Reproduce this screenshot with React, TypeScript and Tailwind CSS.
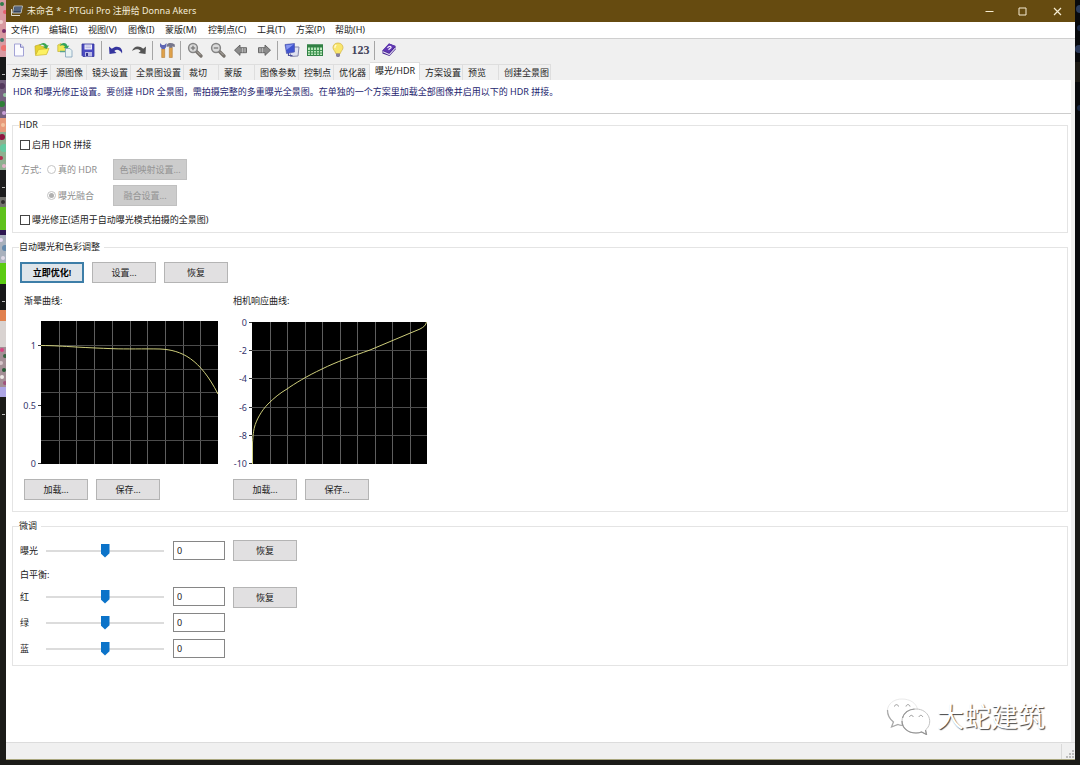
import React from "react";

const menus = [
  { label: "文件(F)", width: "w-[38px]" },
  { label: "编辑(E)", width: "w-[39px]" },
  { label: "视图(V)", width: "w-[40px]" },
  { label: "图像(I)", width: "w-[37px]" },
  { label: "蒙版(M)", width: "w-[43px]" },
  { label: "控制点(C)", width: "w-[49px]" },
  { label: "工具(T)", width: "w-[39px]" },
  { label: "方案(P)", width: "w-[39px]" },
  { label: "帮助(H)", width: "w-[39px]" },
];

const tabs = [
  { label: "方案助手", width: "w-[44px]" },
  { label: "源图像", width: "w-[36px]" },
  { label: "镜头设置", width: "w-[44px]" },
  { label: "全景图设置", width: "w-[53px]" },
  { label: "裁切", width: "w-[35px]" },
  { label: "蒙版", width: "w-[36px]" },
  { label: "图像参数", width: "w-[44px]" },
  { label: "控制点", width: "w-[35px]" },
  { label: "优化器", width: "w-[36px]" },
  { label: "曝光/HDR", width: "w-[50px]", active: true },
  { label: "方案设置", width: "w-[43px]" },
  { label: "预览", width: "w-[36px]" },
  { label: "创建全景图", width: "w-[52px]" },
];

function Icon({ children }: { children: React.ReactNode }) {
  return (
    <svg viewBox="0 0 16 16" className="h-4 w-4" aria-hidden="true">
      {children}
    </svg>
  );
}

function Magnifier({ plus }: { plus?: boolean }) {
  return (
    <Icon>
      <path d="M9.5 9.5 14 14" stroke="#77726c" strokeWidth="3.2" strokeLinecap="round" />
      <path d="M10 9.6 13.600 13.200" stroke="#b5b1ac" strokeWidth="1" />
      <circle cx="6" cy="6" r="4.4" fill="#dadada" stroke="#858585" strokeWidth="1.5" />
      <path d="M3.8 6h4.4" stroke="#777" strokeWidth="1.3" />
      {plus && <path d="M6 3.8v4.4" stroke="#777" strokeWidth="1.3" />}
    </Icon>
  );
}

const toolGroups: { label: string; icon: React.ReactNode }[][] = [
  [
    {
      label: "新建",
      icon: (
        <Icon>
          <path d="M3.5 2h6l3 3.2V14h-9z" fill="#fbfbff" stroke="#a3a3d6" />
          <path d="M9.5 2v3.2h3" fill="#dcdcf4" stroke="#8080c0" />
        </Icon>
      ),
    },
    {
      label: "打开",
      icon: (
        <Icon>
          <path d="M1.500 12.500 1 4 6 2.500 7.500 4.500 13 5v6z" fill="#e6d22f" stroke="#c2ab28" strokeWidth=".7" />
          <path d="M1.500 13.500 4.500 7.500 15 6.500 12.500 12.500z" fill="#fcf162" stroke="#d0b92c" strokeWidth=".7" />
          <path d="M5 3.500C7.500-.2 12 .3 13 3.500L14.700 3 12.500 7 9 5l1.800-.6C10 2.800 7 2.300 5 3.500z" fill="#3aa551" />
        </Icon>
      ),
    },
    {
      label: "添加图像",
      icon: (
        <Icon>
          <path d="M.8 9.500V3L4 1.500 5.500 3H9v6.500z" fill="#f4e752" stroke="#c3b23a" strokeWidth=".7" />
          <path d="M2.500 4C5-.2 9.500.5 10.500 4L12.200 3.500 10 7.500l-3.500-2L8 5C7.500 3 4.500 2.700 2.500 4z" fill="#36a45c" />
          <path d="M8.500 6.500H13l2 2.200V15H8.500z" fill="#e9f3f3" stroke="#7f9fba" strokeWidth=".8" />
          <path d="M3 9.500h5" stroke="#58a58c" strokeWidth="1.500" />
        </Icon>
      ),
    },
    {
      label: "保存",
      icon: (
        <Icon>
          <path d="M2 2h12v12.500H3L2 13.500z" fill="#4a4ac0" stroke="#34349a" strokeWidth=".8" />
          <rect x="4.500" y="2.500" width="7.500" height="5" fill="#eeeefa" />
          <path d="M5.500 4h5.500M5.500 5.700h5.500" stroke="#9a9ad2" strokeWidth=".7" />
          <rect x="5" y="10" width="7" height="4.500" fill="#b9b9e4" />
          <rect x="6" y="11" width="2" height="3" fill="#33338f" />
        </Icon>
      ),
    },
  ],
  [
    {
      label: "撤销",
      icon: (
        <Icon>
          <path d="M1 4.500 1.500 12 8.500 11 6.300 9C8.500 6.800 12 7.500 14 11.500 15.500 5.500 9 2.300 3.800 6.800z" fill="#34349e" />
        </Icon>
      ),
    },
    {
      label: "重做",
      icon: (
        <Icon>
          <path d="M15 4.500 14.500 12 7.500 11 9.700 9C8 6.800 4.500 6.800 1 9 2.500 4 8 2.800 12.200 6.800z" fill="#555" />
        </Icon>
      ),
    },
  ],
  [
    {
      label: "选项",
      icon: (
        <Icon>
          <path d="M2.700 7h3v8.500h-3zM10.300 5.500h3v10h-3z" fill="#dfa24b" stroke="#ad7127" strokeWidth=".5" />
          <path d="M1 1v3.500L2.800 7h2.900l1.800-2.500V1L5.400 3H3z" fill="#5f66b4" />
          <path d="M8 2.500C10 .5 13 .8 15.800 2.500V5L13.300 4.500v1.200h-3V4.500L8 4.800z" fill="#77778c" />
        </Icon>
      ),
    },
  ],
  [
    { label: "放大", icon: <Magnifier plus /> },
    { label: "缩小", icon: <Magnifier /> },
    {
      label: "上一个",
      icon: (
        <Icon>
          <path d="M1.500 8.200 7 3v2.700h6.500v5H7v2.700z" fill="#8b8b8b" stroke="#606060" strokeWidth=".9" />
          <path d="M9.500 6v4.400M12 6v4.400" stroke="#c5c5c5" strokeWidth=".8" />
        </Icon>
      ),
    },
    {
      label: "下一个",
      icon: (
        <Icon>
          <path d="M14.500 8.200 9 3v2.700H2.500v5H9v2.700z" fill="#8b8b8b" stroke="#606060" strokeWidth=".9" />
          <path d="M6.500 6v4.400M4 6v4.400" stroke="#c5c5c5" strokeWidth=".8" />
        </Icon>
      ),
    },
  ],
  [
    {
      label: "全景图编辑器",
      icon: (
        <Icon>
          <path d="M8 5h7l-1 9-7.500.5v-3" fill="#dfe1f0" stroke="#8587ac" />
          <path d="M1 2.500 10.500 1.500v8.500L2.500 11.500z" fill="#4054cf" stroke="#4a52a8" strokeWidth=".6" />
          <path d="M2 3.300 9.800 2.300 2.500 8z" fill="#8897ef" />
          <path d="M4.500 11v2.500h4" fill="none" stroke="#4b4f9d" strokeWidth="1.200" />
        </Icon>
      ),
    },
    {
      label: "控制点表",
      icon: (
        <Icon>
          <rect x=".5" y="3" width="15" height="10.500" fill="#c5edc4" stroke="#318044" />
          <rect x="0" y="2.500" width="16" height="3" fill="#318044" />
          <path d="M1 8.500h14M1 11h14M3.500 5v8.500M6.500 5v8.500M9.500 5v8.500M12.500 5v8.500" stroke="#3d9350" strokeWidth="1.200" />
        </Icon>
      ),
    },
    {
      label: "提示",
      icon: (
        <Icon>
          <path d="M8 1C4.800 1 3 3.200 3 5.700 3 8 5.300 9 5.700 11.500h4.600C10.700 9 13 8 13 5.700 13 3.200 11.200 1 8 1z" fill="#f9e66d" stroke="#d5b94c" strokeWidth=".8" />
          <path d="M6.300 3C5 3.800 4.700 5 5 6" fill="none" stroke="#fffce4" strokeWidth="1.200" />
          <path d="M6 11.500h4v2.500L9 15H7L6 14z" fill="#85809d" />
        </Icon>
      ),
    },
    {
      label: "数字变换",
      icon: <span className="font-['Liberation_Serif',serif] text-[12px] font-bold leading-4 text-[#44445a]">123</span>,
    },
  ],
  [
    {
      label: "帮助",
      icon: (
        <Icon>
          <path d="M1.500 8.500 8 1.500l6.500 2.500v3.500L8.500 14 1.500 11.500z" fill="#42208c" />
          <path d="M1.500 8.500 8 1.500l6.500 2.500L8 11z" fill="#6038b2" />
          <path d="M2 9.800 8.300 12.500l6-6.500" fill="none" stroke="#e6dff5" strokeWidth="1.100" />
          <path d="M6.500 5.800C8 3.500 10.500 4.200 10 5.700L7.500 7.700" fill="none" stroke="#f5e9ff" strokeWidth="1.200" />
        </Icon>
      ),
    },
  ],
];

function PushButton({ children, primary, disabled, wide }: { children: React.ReactNode; primary?: boolean; disabled?: boolean; wide?: boolean }) {
  return (
    <button
      type="button"
      disabled={disabled}
      className={[
        "h-[21px] shrink-0 text-center",
        wide ? "w-[74px]" : "w-16",
        primary
          ? "border-2 border-[#3d7ea8] bg-[#dfe5ea] font-semibold text-black"
          : disabled
            ? "border border-[#c0c0c0] bg-[#cccccc] text-[#939393]"
            : "border border-[#b4b4b4] bg-[#e1e0e1] text-[#1c1c1c]",
      ].join(" ")}
    >
      {children}
    </button>
  );
}

function Group({ title, className, children }: { title: string; className: string; children: React.ReactNode }) {
  return (
    <fieldset className={"min-w-0 border border-[#e4e4e4] px-[7px] " + className}>
      <legend className="-ml-px pr-1 text-[#222]">{title}</legend>
      {children}
    </fieldset>
  );
}

function Check({ id, label }: { id: string; label: string }) {
  return (
    <div className="flex h-[14px] items-center gap-[2px]">
      <input id={id} type="checkbox" className="h-[10px] w-[10px] appearance-none border border-[#444] bg-white checked:bg-[#0078d7]" />
      <label htmlFor={id}>{label}</label>
    </div>
  );
}

function Radio({ id, label, checked }: { id: string; label: string; checked?: boolean }) {
  return (
    <div className="flex w-[66px] items-center gap-[2px] text-[#8e8e8e]">
      <input
        id={id}
        name="method"
        type="radio"
        disabled
        defaultChecked={checked}
        className="h-[9px] w-[9px] appearance-none rounded-full border border-[#c4c4c4] bg-white bg-clip-content p-[1px] checked:bg-[#b0b0b0]"
      />
      <label htmlFor={id}>{label}</label>
    </div>
  );
}

type Tick = { y: number; label: string };

function Plot({ title, left, top, width, height, rows, ticks, curve }: {
  title: string; left: number; top: number; width: number; height: number; rows: number[]; ticks: Tick[]; curve: string;
}) {
  const columns = Array.from({ length: 9 }, (_, i) => Math.round(left + ((i + 1) * width) / 10) + 0.5);
  return (
    <svg viewBox="0 0 204 158" className="mt-[7px] block h-[158px] w-[204px] overflow-visible" role="img" aria-label={title}>
      <rect x={left} y={top} width={width} height={height} fill="#000" />
      {columns.map((x) => (
        <path key={x} d={`M${x} ${top}v${height}`} stroke="#5e5e5e" />
      ))}
      {rows.map((y) => (
        <path key={y} d={`M${left} ${y + 0.5}h${width}`} stroke="#4c4c4c" />
      ))}
      {ticks.map((t) => (
        <g key={t.label}>
          <path d={`M${left - 3} ${t.y + 0.5}h3`} stroke="#333" />
          <text x={left - 5} y={t.y + 4} textAnchor="end" fontSize="9" fill="#34346c">{t.label}</text>
        </g>
      ))}
      <path d={curve} fill="none" stroke="#cfcf7c" strokeWidth="1" />
    </svg>
  );
}

function Slider({ id, label }: { id: string; label: string }) {
  return (
    <>
      <label htmlFor={id} className="w-[26px] shrink-0">{label}</label>
      <input
        id={id}
        type="range"
        min={-100}
        max={100}
        defaultValue={0}
        className="h-4 w-[118px] appearance-none bg-transparent [&::-webkit-slider-runnable-track]:h-[2px] [&::-webkit-slider-runnable-track]:bg-[#dcdcdc] [&::-webkit-slider-thumb]:-mt-[6px] [&::-webkit-slider-thumb]:h-[14px] [&::-webkit-slider-thumb]:w-[9px] [&::-webkit-slider-thumb]:appearance-none [&::-webkit-slider-thumb]:bg-[#0b73c9] [&::-webkit-slider-thumb]:[clip-path:polygon(0_0,100%_0,100%_70%,50%_100%,0_70%)]"
      />
      <input
        type="text"
        defaultValue="0"
        aria-label={label + "数值"}
        className="ml-[9px] h-[19px] w-[52px] border border-[#868686] bg-white px-[3px] pb-px leading-3 text-[#222]"
      />
    </>
  );
}

function LeftDesktop() {
  const blocks: [number, number, string][] = [
    [0, 57, "#d99aa2"], [57, 23, "#171819"], [80, 38, "#75607f"], [118, 14, "#e79a7b"], [132, 38, "#8eb08f"],
    [170, 27, "#1d1d1e"], [197, 10, "#74736f"], [207, 23, "#5fc21d"], [230, 5, "#2d1650"], [235, 28, "#a8b0bc"],
    [263, 21, "#5bcb12"], [284, 26, "#171718"], [310, 11, "#e1814f"], [321, 26, "#d9d3d1"], [347, 40, "#a48f96"],
    [387, 10, "#ada5e4"],
  ];
  const spots: [number, number, number, string][] = [
    [2, 4, 2, "#327c4a"], [5, 12, 2, "#e35f6f"], [1, 22, 2, "#f0cfcf"], [4, 31, 2, "#7a2d68"], [2, 40, 2, "#3b7568"], [4, 48, 3, "#ed716f"],
    [2, 86, 3, "#53385d"], [5, 95, 2, "#96c4a3"], [2, 104, 3, "#2f7e38"], [4, 113, 2, "#c9a1d8"], [3, 125, 2, "#f3c3a0"],
    [2, 137, 3, "#8f1640"], [4, 148, 4, "#65caa0"], [1, 158, 2, "#b22e4d"], [4, 166, 2, "#dfb0c4"], [3, 202, 2, "#302f2e"],
    [1, 240, 2, "#e4d9f0"], [5, 248, 3, "#6489ac"], [3, 258, 2, "#ddd7e5"],
    [2, 350, 2, "#d84482"], [5, 356, 2, "#386442"], [1, 363, 2, "#d7c5ca"], [4, 370, 2, "#285b37"], [2, 377, 2, "#eee9e7"], [5, 383, 2, "#a0527d"],
  ];
  return (
    <svg viewBox="0 0 6 420" className="h-[420px] w-[6px]" aria-hidden="true">
      {blocks.map(([y, h, fill]) => <rect key={y} y={y} width="6" height={h} fill={fill} />)}
      {spots.map(([x, y, r, fill]) => <circle key={y} cx={x} cy={y} r={r} fill={fill} />)}
      {[74, 187, 301, 414].map((y) => <rect key={y} x="2" y={y} width="3" height="1" fill="#bbb" />)}
    </svg>
  );
}

export default function App() {
  return (
    <div lang="zh-CN" className="relative flex min-h-screen bg-[#1b1b18] pb-[5px] font-['Noto_Sans','Noto_Sans_CJK_SC',sans-serif] text-[9px] leading-3 text-[#222]">
      <div className="w-[6px] shrink-0">
        <LeftDesktop />
      </div>

      <div className="flex min-w-0 flex-1 flex-col border-b border-[#a9a67e] bg-white">
        <header className="flex h-[22px] items-center bg-[#664b10] text-[#f3ecd9]">
          <svg viewBox="0 0 12 12" className="ml-[5px] h-3 w-3" aria-hidden="true">
            <path d="M3 1h8.500L10 8H1.500z" fill="#35435b" stroke="#c9ccc8" strokeWidth=".9" />
            <path d="M3.500 3h7M3 5h7" stroke="#8fa3bb" strokeWidth=".7" />
            <path d="M.5 4v6.500H9" fill="none" stroke="#dedcd0" strokeWidth="1" />
          </svg>
          <h1 className="ml-1 flex-1 whitespace-nowrap">未命名 * - PTGui Pro 注册给 Donna Akers</h1>
          <div className="flex">
            <button type="button" aria-label="最小化" className="flex h-[22px] w-[33px] items-center justify-center">
              <svg viewBox="0 0 9 9" className="h-[9px] w-[9px]"><path d="M.5 4.500h8" stroke="#f6ecd2" /></svg>
            </button>
            <button type="button" aria-label="最大化" className="flex h-[22px] w-[33px] items-center justify-center">
              <svg viewBox="0 0 9 9" className="h-[9px] w-[9px]"><path d="M1 1h7v7H1z" fill="none" stroke="#f6ecd2" /></svg>
            </button>
            <button type="button" aria-label="关闭" className="flex h-[22px] w-9 items-center justify-center">
              <svg viewBox="0 0 9 9" className="h-[9px] w-[9px]"><path d="m1 1 7 7M8 1 1 8" stroke="#f6ecd2" strokeWidth="1.200" /></svg>
            </button>
          </div>
        </header>

        <nav className="flex h-[17px] items-center border-b border-[#cfcfcf] bg-white pl-[5px]">
          {menus.map((m) => (
            <button key={m.label} type="button" className={"whitespace-nowrap text-left " + m.width}>{m.label}</button>
          ))}
        </nav>

        <div className="flex h-[22px] items-center bg-[#f0f0f0] pl-px" role="toolbar">
          {toolGroups.map((group, i) => (
            <div key={i} className="flex items-center">
              {i > 0 && <span className="mx-[2px] h-[19px] w-px bg-[#a5a5a5]" />}
              {group.map((tool) => (
                <button key={tool.label} type="button" aria-label={tool.label} className="flex h-[22px] w-[23px] items-center justify-center">
                  {tool.icon}
                </button>
              ))}
            </div>
          ))}
        </div>

        <div className="flex h-[19px] items-end bg-[#f0f0f0] pl-px" role="tablist">
          {tabs.map((t) => (
            <button
              key={t.label}
              type="button"
              role="tab"
              aria-selected={!!t.active}
              className={[
                "shrink-0 whitespace-nowrap border-r border-t border-[#dedede] pl-[5px] text-left",
                t.width,
                t.active ? "h-[18px] bg-white pb-[2px]" : "h-4",
              ].join(" ")}
            >
              {t.label}
            </button>
          ))}
        </div>

        <main className="flex-1 border-r-4 border-[#f0f0f0] bg-white">
          <p className="h-[34px] border-b border-[#cdcdcd] pl-[7px] pt-[6px] text-[#24246e]">
            HDR 和曝光修正设置。要创建 HDR 全景图，需拍摄完整的多重曝光全景图。在单独的一个方案里加载全部图像并启用以下的 HDR 拼接。
          </p>

          <div className="flex flex-col gap-2 pl-[6px] pr-[3px] pt-[5px]">
            <Group title="HDR" className="pb-[5px]">
              <div className="flex flex-col gap-[7px] pt-[7px]">
                <Check id="enable-hdr" label="启用 HDR 拼接" />
                <div className="flex flex-col gap-[5px]">
                  <div className="flex items-center">
                    <span className="w-[27px] pl-px text-[#8e8e8e]">方式:</span>
                    <Radio id="true-hdr" label="真的 HDR" />
                    <PushButton disabled wide>色调映射设置...</PushButton>
                  </div>
                  <div className="flex items-center pl-[27px]">
                    <Radio id="fusion" label="曝光融合" checked />
                    <PushButton disabled>融合设置...</PushButton>
                  </div>
                </div>
                <Check id="exposure-fix" label="曝光修正(适用于自动曝光模式拍摄的全景图)" />
              </div>
            </Group>

            <Group title="自动曝光和色彩调整" className="pb-[11px]">
              <div className="flex gap-2 pt-[9px]">
                <PushButton primary>立即优化!</PushButton>
                <PushButton>设置...</PushButton>
                <PushButton>恢复</PushButton>
              </div>
              <div className="flex pl-1 pt-3">
                <section className="w-[209px] shrink-0">
                  <h2>渐晕曲线:</h2>
                  <Plot
                    title="渐晕曲线"
                    left={17} top={7} width={177} height={143}
                    rows={[31, 55, 78, 102, 126]}
                    ticks={[{ y: 31, label: "1" }, { y: 91, label: "0.5" }, { y: 149, label: "0" }]}
                    curve="M17 31.500C30 31.600 38 32.200 52 33S76 34.200 89 34.700 120 34.700 136 35C158 36 176 45 194 80"
                  />
                  <div className="flex gap-2 pt-[7px]">
                    <PushButton>加载...</PushButton>
                    <PushButton>保存...</PushButton>
                  </div>
                </section>
                <section>
                  <h2>相机响应曲线:</h2>
                  <Plot
                    title="相机响应曲线"
                    left={19} top={8} width={175} height={142}
                    rows={[36, 64, 93, 121]}
                    ticks={[
                      { y: 8, label: "0" }, { y: 36, label: "-2" }, { y: 64, label: "-4" },
                      { y: 93, label: "-6" }, { y: 121, label: "-8" }, { y: 149, label: "-10" },
                    ]}
                    curve="M19.500 150V129C20 121 20.500 117 21.500 113C23 107 28 97 35 90C41 84 47 79 54 75C61 70 74 62 89 55C103 48 120 42 137 36L175 20L187 15C191 13 193 11 193.500 8"
                  />
                  <div className="flex gap-2 pt-[7px]">
                    <PushButton>加载...</PushButton>
                    <PushButton>保存...</PushButton>
                  </div>
                </section>
              </div>
            </Group>

            <Group title="微调" className="pb-[7px]">
              <div className="flex items-center pt-2">
                <Slider id="exposure" label="曝光" />
                <span className="w-2" />
                <PushButton>恢复</PushButton>
              </div>
              <h2 className="pt-2">白平衡:</h2>
              <div className="flex pt-[6px]">
                <div className="flex flex-col gap-[7px]">
                  <div className="flex items-center"><Slider id="red" label="红" /></div>
                  <div className="flex items-center"><Slider id="green" label="绿" /></div>
                  <div className="flex items-center"><Slider id="blue" label="蓝" /></div>
                </div>
                <div className="pl-2">
                  <PushButton>恢复</PushButton>
                </div>
              </div>
            </Group>
          </div>
        </main>

        <footer className="flex h-[17px] items-end justify-end border-t border-[#dcdcdc] bg-[#f0f0f0]">
          <span className="mr-1 h-[15px] w-px bg-[#d9d9d9]" />
          <svg viewBox="0 0 8 8" className="mb-px mr-px h-2 w-2" aria-hidden="true">
            <path d="M6 0h2v2H6zM3 3h2v2H3zM6 3h2v2H6zM0 6h2v2H0zM3 6h2v2H3zM6 6h2v2H6z" fill="#bdbdbd" />
          </svg>
        </footer>
      </div>

      <svg viewBox="0 0 5 400" className="h-[400px] w-[5px] shrink-0" aria-hidden="true">
        <rect width="5" height="400" fill="#08090c" />
        <circle cx="5" cy="9" r="4" fill="#2b3c5c" />
        <circle cx="5" cy="28" r="3" fill="#1d2c49" />
        <circle cx="4" cy="49" r="4" fill="#2c3a5a" />
        <rect y="62" width="5" height="20" fill="#1c1a15" />
        <circle cx="5" cy="108" r="3" fill="#182742" />
      </svg>

      <div className="absolute bottom-[30px] right-[35px] flex items-center gap-[6px]">
        <svg viewBox="0 0 46 38" className="h-[38px] w-[46px]" fill="none" aria-hidden="true">
          <path d="M21 28c-3 .6-6 .3-8-.5L6.500 30l1.500-5C-3 16 3 2 17 2c8 0 14 4 15.500 10" stroke="#eaeaea" />
          <path d="M2.500 13c0 5 2 9 6 12l-2 5 6.500-2.500c2 .8 5 1.100 7 .6" stroke="#a8a8a8" strokeWidth="1.200" />
          <path d="M31 12c-8 0-14 5-14 12s6 12 14 12c2 0 4-.3 5.500-1l5 2.500-1-4.500C49 26 44 12 31 12z" fill="#fff" stroke="#c4c4c4" />
          <path d="M17 24c0 7 6 12 14 12 2 0 4-.3 5.500-1l5 2.500-1-4.500M17.500 21c1.500-5 6-8.500 12-9" stroke="#959595" strokeWidth="1.200" />
          <path d="M9.500 9.500c.5-2.500 3.500-2.500 4 0M21 9.500c.5-2.500 3.500-2.500 4 0M24.500 20c.5-2.200 3.300-2.200 3.700 0M34 20c.5-2.200 3.300-2.200 3.700 0" stroke="#999" />
        </svg>
        <span className="whitespace-nowrap font-['Noto_Sans_CJK_SC',sans-serif] text-[27px] leading-8 text-white [text-shadow:1px_1px_1px_#444]">大蛇建筑</span>
      </div>
    </div>
  );
}
